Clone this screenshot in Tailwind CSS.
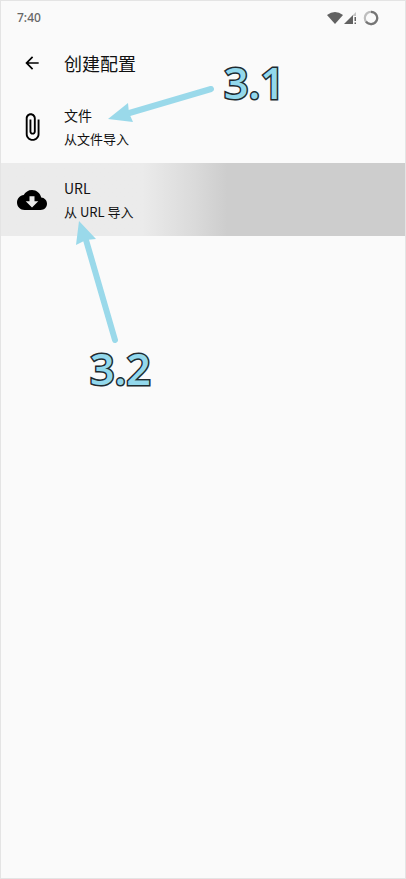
<!DOCTYPE html>
<html lang="zh-CN">
<head>
<meta charset="utf-8">
<meta name="viewport" content="width=device-width, initial-scale=1">
<title>创建配置</title>
<script src="https://cdn.jsdelivr.net/npm/@tailwindcss/browser@4"></script>
</head>
<body class="bg-[#fafafa] font-['Noto_Sans_CJK_SC',sans-serif] text-[#111]">
<div class="relative min-h-screen overflow-hidden border border-[#e4e4e4]">
  <div class="flex h-[34px] items-center justify-between pl-4 pr-[26px] text-[#666]">
    <span class="font-['Noto_Sans',sans-serif] text-xs font-medium">7:40</span>
    <div class="flex items-center gap-px">
      <svg class="h-3 w-4" viewBox="0 0 16 12" fill="#616161" aria-hidden="true"><path d="M0 3Q8-3 16 3L8 12Z"/></svg>
      <svg class="h-3 w-3" viewBox="0 0 12 12" aria-hidden="true"><path d="M0 12 9 3V12Z" fill="#616161"/><path d="M9 3 12 0V4H9Z" fill="#c4c4c4"/><path d="M10.5 5h1.5v4h-1.5zM10.5 10.5H12V12h-1.5z" fill="#616161"/></svg>
      <svg class="ml-1.5 size-4" viewBox="0 0 16 16" fill="none" stroke-width="2.2" aria-hidden="true"><circle cx="8" cy="8" r="6.2" stroke="#bdbdbd"/><path d="M8 1.8A6.2 6.2 0 1 1 3 11.7" stroke="#757575"/></svg>
    </div>
  </div>

  <header class="flex h-14 items-center">
    <button type="button" aria-label="返回" class="flex w-[63px] justify-center pr-0.5">
      <svg class="size-5" viewBox="0 0 24 24" aria-hidden="true"><path d="M20 11H7.83l5.59-5.59L12 4l-8 8 8 8 1.41-1.41L7.83 13H20z"/></svg>
    </button>
    <h1 class="text-lg">创建配置</h1>
  </header>

  <main>
    <button type="button" class="flex h-[72px] w-full items-center text-left">
      <span class="flex w-[63px] justify-center pr-0.5">
        <svg class="size-[30px]" viewBox="0 0 24 24" aria-hidden="true"><path d="M16.5 6v11.5c0 2.21-1.79 4-4 4s-4-1.79-4-4V5c0-1.38 1.12-2.5 2.5-2.5s2.5 1.12 2.5 2.5v10.5c0 .55-.45 1-1 1s-1-.45-1-1V6H10v9.5c0 1.38 1.12 2.5 2.5 2.5s2.5-1.12 2.5-2.5V5c0-2.21-1.79-4-4-4S7 2.79 7 5v12.5c0 3.04 2.46 5.5 5.5 5.5s5.5-2.46 5.5-5.5V6h-1.5z"/></svg>
      </span>
      <span class="flex flex-col gap-1">
        <span class="text-sm leading-5">文件</span>
        <span class="text-[13px] leading-5">从文件导入</span>
      </span>
    </button>
    <button type="button" class="flex h-[73px] w-full items-center bg-linear-to-r from-[#ebebeb] from-35% via-[#dadada] via-48% to-[#cdcdcd] to-56% text-left">
      <span class="flex w-[63px] justify-center pr-0.5">
        <svg class="size-[30px]" viewBox="0 0 24 24" aria-hidden="true"><path d="M19.35 10.04C18.67 6.59 15.64 4 12 4 9.11 4 6.6 5.64 5.35 8.04 2.34 8.36 0 10.91 0 14c0 3.31 2.69 6 6 6h13c2.76 0 5-2.24 5-5 0-2.64-2.05-4.78-4.65-4.96zM17 13l-5 5-5-5h3V9h4v4h3z"/></svg>
      </span>
      <span class="flex flex-col gap-1">
        <span class="text-sm leading-5">URL</span>
        <span class="text-[13px] leading-5">从 URL 导入</span>
      </span>
    </button>
  </main>

  <svg class="pointer-events-none absolute -left-px -top-px h-[360px] w-[300px]" viewBox="0 0 300 360" fill="#9ad9ea" stroke="#9ad9ea" aria-hidden="true">
    <path d="M211 89 126 114M115 340 86 240" stroke-width="6" stroke-linecap="round"/>
    <path d="M108 119 128 103 129 113 133 122ZM79 221 96 239 86 240 76 245Z" stroke="none"/>
  </svg>
  <span class="absolute left-[223px] top-[58px] font-['Open_Sans',sans-serif] text-[43px] font-semibold leading-12 text-[#92d8ec] [-webkit-text-stroke:3px_#202a2e] [paint-order:stroke_fill]">3.1</span>
  <span class="absolute left-[89px] top-[344px] font-['Open_Sans',sans-serif] text-[43px] font-semibold leading-12 text-[#92d8ec] [-webkit-text-stroke:3px_#202a2e] [paint-order:stroke_fill]">3.2</span>
</div>
</body>
</html>
